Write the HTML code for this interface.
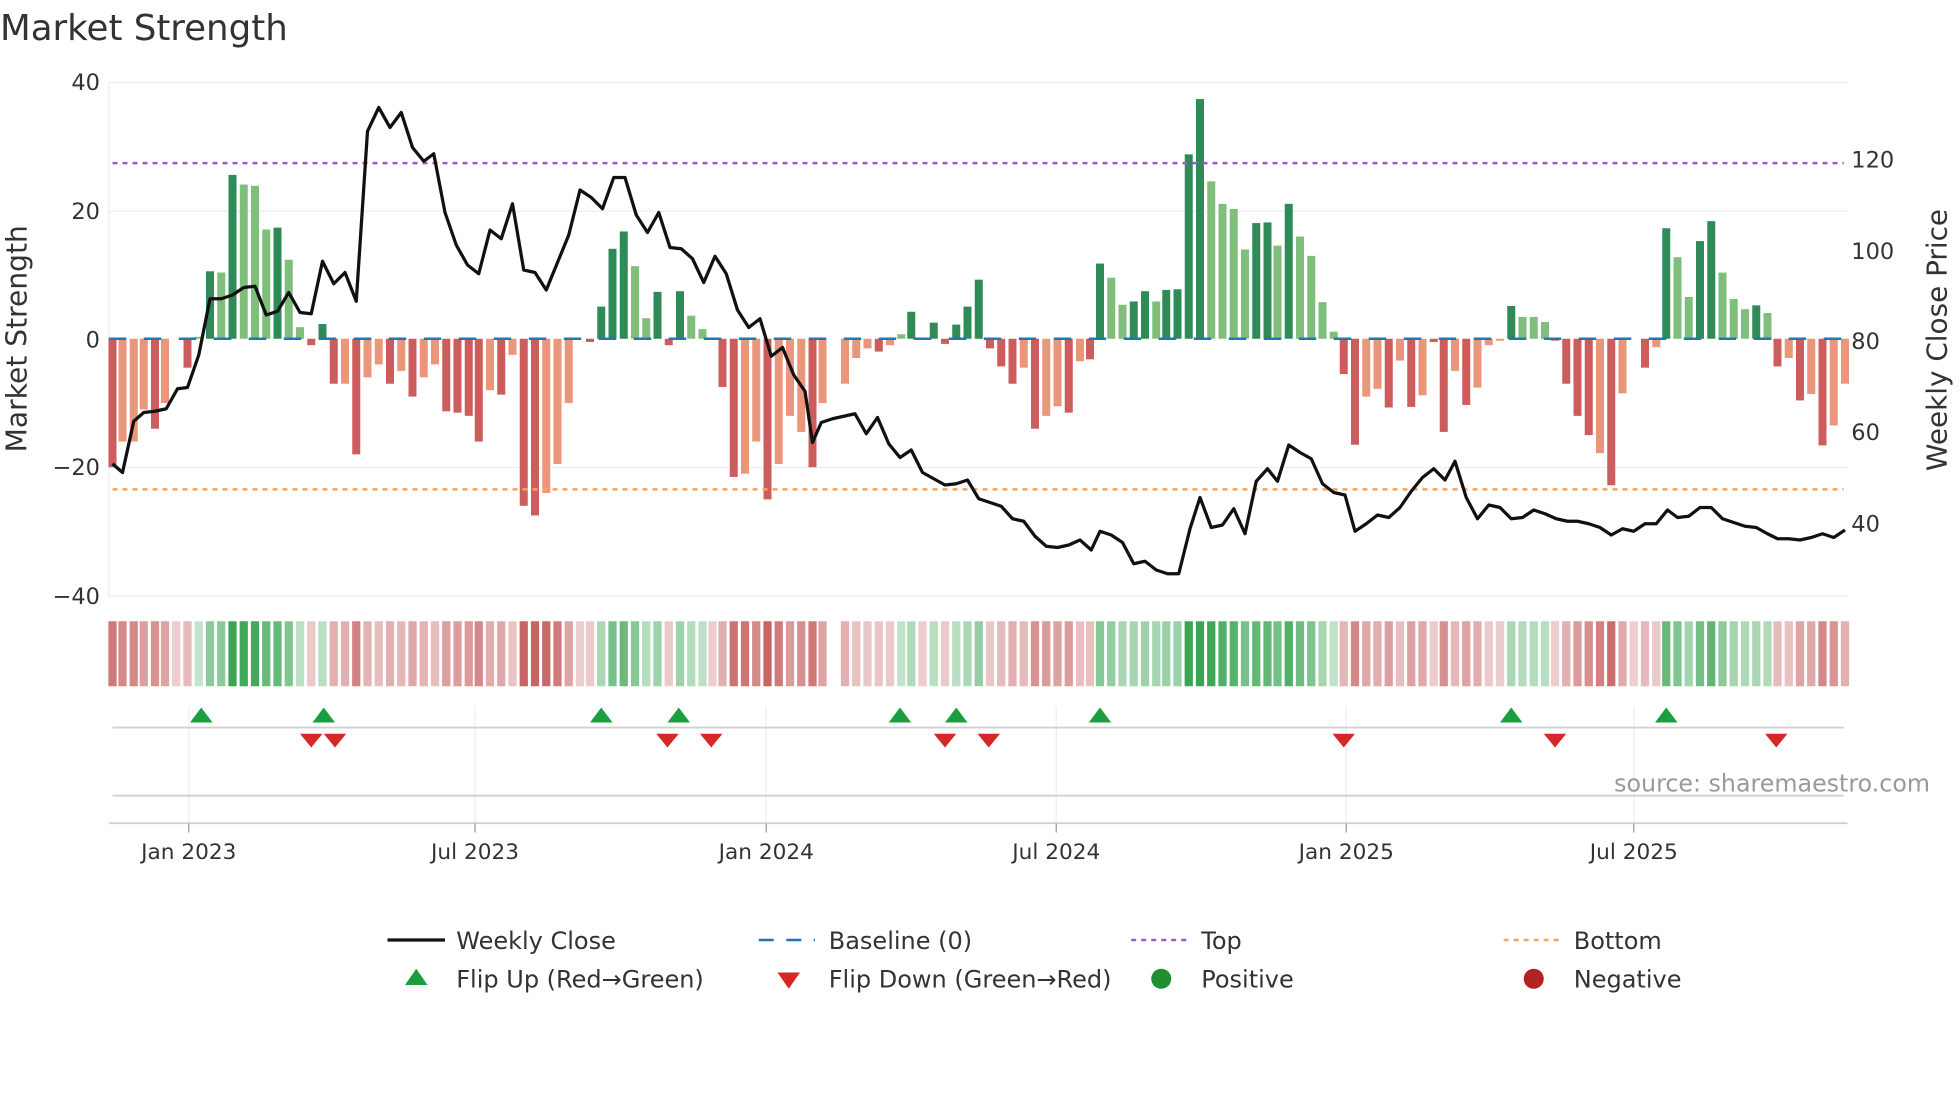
<!DOCTYPE html>
<html><head><meta charset="utf-8"><style>
html,body{margin:0;padding:0;background:#fff;}
svg{display:block;font-family:"DejaVu Sans","Liberation Sans",sans-serif;}
</style></head><body>
<svg id="s" width="1960" height="1102" viewBox="0 0 1568 881.6" xmlns="http://www.w3.org/2000/svg">
<rect width="1568" height="882" fill="#fff"/>
<text x="0" y="32" font-size="28.5" fill="#333">Market Strength</text>
<g stroke="#eceef2" stroke-width="1">
<line x1="87" y1="66" x2="1478" y2="66"/><line x1="87" y1="169" x2="1478" y2="169"/>
<line x1="87" y1="374" x2="1478" y2="374"/><line x1="87" y1="477" x2="1478" y2="477"/>
<line x1="87" y1="66" x2="87" y2="477"/>
</g>
<g font-size="18" fill="#333" text-anchor="end">
<text x="80" y="72">40</text><text x="80" y="175">20</text><text x="80" y="278">0</text>
<text x="80" y="380">−20</text><text x="80" y="483">−40</text>
</g>
<g font-size="18" fill="#333">
<text x="1481" y="134">120</text><text x="1481" y="207">100</text><text x="1481" y="279">80</text>
<text x="1481" y="352">60</text><text x="1481" y="425">40</text>
</g>
<text transform="translate(21,271) rotate(-90)" font-size="22.5" fill="#333" text-anchor="middle">Market Strength</text>
<text transform="translate(1557,272) rotate(-90)" font-size="22.3" fill="#333" text-anchor="middle">Weekly Close Price</text>
<g id="bars"></g>
<line x1="87" y1="271" x2="1478" y2="271" stroke="#1f77b4" stroke-width="2" stroke-dasharray="14 14"/>
<line x1="90" y1="130.5" x2="1475" y2="130.5" stroke="#9b59d6" stroke-width="2" stroke-dasharray="4 4"/>
<line x1="90" y1="391.5" x2="1475" y2="391.5" stroke="#f4a460" stroke-width="2" stroke-dasharray="4 4"/>
<polyline id="price" fill="none" stroke="#111" stroke-width="2.6" stroke-linejoin="round"/>
<g id="strip"></g>
<g stroke="#eceef2" stroke-width="1">
<line x1="151" y1="565" x2="151" y2="658"/><line x1="380" y1="565" x2="380" y2="658"/>
<line x1="613" y1="565" x2="613" y2="658"/><line x1="845" y1="565" x2="845" y2="658"/>
<line x1="1077" y1="565" x2="1077" y2="658"/><line x1="1307" y1="565" x2="1307" y2="658"/>
</g>
<line x1="90" y1="582" x2="1475" y2="582" stroke="#d0d0d0" stroke-width="1.5"/>
<line x1="90" y1="636.5" x2="1475" y2="636.5" stroke="#d0d0d0" stroke-width="1.5"/>
<line x1="87" y1="658.5" x2="1478" y2="658.5" stroke="#d0d0d0" stroke-width="1.5"/>
<g stroke="#999" stroke-width="1">
<line x1="151" y1="659" x2="151" y2="666"/><line x1="380" y1="659" x2="380" y2="666"/>
<line x1="613" y1="659" x2="613" y2="666"/><line x1="845" y1="659" x2="845" y2="666"/>
<line x1="1077" y1="659" x2="1077" y2="666"/><line x1="1307" y1="659" x2="1307" y2="666"/>
</g>
<g id="flips"></g>
<g font-size="17.3" fill="#333" text-anchor="middle">
<text x="151" y="687">Jan 2023</text><text x="380" y="687">Jul 2023</text><text x="613" y="687">Jan 2024</text>
<text x="845" y="687">Jul 2024</text><text x="1077" y="687">Jan 2025</text><text x="1307" y="687">Jul 2025</text>
</g>
<text x="1544" y="633" font-size="19" fill="#999" text-anchor="end">source: sharemaestro.com</text>
<g font-size="19.2" fill="#333">
<line x1="310" y1="752" x2="356" y2="752" stroke="#111" stroke-width="2.6"/>
<text x="365" y="759">Weekly Close</text>
<line x1="607" y1="752" x2="652" y2="752" stroke="#1f77b4" stroke-width="2" stroke-dasharray="12 10"/>
<text x="663" y="759">Baseline (0)</text>
<line x1="905" y1="752" x2="950" y2="752" stroke="#9b59d6" stroke-width="2" stroke-dasharray="4 4"/>
<text x="961" y="759">Top</text>
<line x1="1203" y1="752" x2="1248" y2="752" stroke="#f4a460" stroke-width="2" stroke-dasharray="4 4"/>
<text x="1259" y="759">Bottom</text>
<polygon points="324,788 342,788 333,775" fill="#1a9e3f"/>
<text x="365" y="790">Flip Up (Red→Green)</text>
<polygon points="622,778 640,778 631,791" fill="#d62728"/>
<text x="663" y="790">Flip Down (Green→Red)</text>
<circle cx="929" cy="783" r="8" fill="#1f8f2f"/>
<text x="961" y="790">Positive</text>
<circle cx="1227" cy="783" r="8" fill="#b22222"/>
<text x="1259" y="790">Negative</text>
</g>
</svg>
<script>
var B=[[90,-20,1],[98,-16,0],[107,-16,0],[115,-11,0],[124,-14,1],[132,-10,0],[141,0,0],[150,-4.5,1],[159,0.3,0],[168,10.5,1],[177,10.3,0],[186,25.5,1],[195,24,0],[204,23.8,0],[213,17,0],[222,17.3,1],[231,12.3,0],[240,1.8,0],[249,-1,1],[258,2.3,1],[267,-7,1],[276,-7,0],[285,-18,1],[294,-6,0],[303,-4,0],[312,-7,1],[321,-5,0],[330,-9,1],[339,-6,0],[348,-4,0],[357,-11.3,1],[366,-11.5,1],[375,-12,1],[383,-16,1],[392,-8,0],[401,-8.7,1],[410,-2.5,0],[419,-26,1],[428,-27.5,1],[437,-24,0],[446,-19.5,0],[455,-10,0],[464,0,0],[472,-0.5,1],[481,5,1],[490,14,1],[499,16.7,1],[508,11.3,0],[517,3.2,0],[526,7.3,1],[535,-1,1],[544,7.4,1],[553,3.6,0],[562,1.5,0],[570,0,0],[578,-7.5,1],[587,-21.5,1],[596,-21,0],[605,-16,0],[614,-25,1],[623,-19.5,0],[632,-12,0],[641,-14.5,0],[650,-20,1],[658,-10,0],[667,0,0],[676,-7,0],[685,-3,0],[694,-1.5,0],[703,-2,1],[712,-1,0],[721,0.7,0],[729,4.2,1],[738,0,0],[747,2.5,1],[756,-0.8,1],[765,2.2,1],[774,5,1],[783,9.2,1],[792,-1.5,1],[801,-4.3,1],[810,-7,1],[819,-4.5,0],[828,-14,1],[837,-12,0],[846,-10.5,0],[855,-11.5,1],[864,-3.5,0],[872,-3.2,1],[880,11.7,1],[889,9.5,0],[898,5.3,0],[907,5.8,1],[916,7.4,1],[925,5.8,0],[933,7.6,1],[942,7.7,1],[951,28.7,1],[960,37.3,1],[969,24.5,0],[978,21,0],[987,20.2,0],[996,13.9,0],[1005,18,1],[1014,18.1,1],[1022,14.5,0],[1031,21,1],[1040,15.9,0],[1049,12.9,0],[1058,5.7,0],[1067,1.1,0],[1075,-5.5,1],[1084,-16.5,1],[1093,-9,0],[1102,-7.8,0],[1111,-10.7,1],[1120,-3.4,0],[1129,-10.6,1],[1138,-8.8,0],[1147,-0.5,1],[1155,-14.5,1],[1164,-5,0],[1173,-10.3,1],[1182,-7.6,0],[1191,-1,0],[1200,-0.3,0],[1209,5.1,1],[1218,3.4,0],[1227,3.4,0],[1236,2.6,0],[1244,-0.3,1],[1253,-7,1],[1262,-12,1],[1271,-15,1],[1280,-17.8,0],[1289,-22.8,1],[1298,-8.5,0],[1307,0,0],[1316,-4.5,1],[1325,-1.3,0],[1333,17.2,1],[1342,12.7,0],[1351,6.5,0],[1360,15.2,1],[1369,18.3,1],[1378,10.3,0],[1387,6.2,0],[1396,4.6,0],[1405,5.2,1],[1414,4,0],[1422,-4.3,1],[1431,-3,0],[1440,-9.6,1],[1449,-8.6,0],[1458,-16.6,1],[1467,-13.5,0],[1476,-7,0]];
var P=[[90,371],[98,378],[107,337],[115,330],[124,329],[133,327],[142,311],[150,310],[159,284],[168,239],[177,239],[186,236],[195,230],[204,229],[213,252],[222,249],[231,234],[240,250],[249,251],[258,209],[267,227],[276,218],[285,241],[294,105],[303,86],[312,102],[321,90],[330,118],[339,129],[347,123],[356,170],[365,196],[374,212],[383,219],[392,184],[401,191],[410,163],[419,216],[428,218],[437,232],[446,210],[455,188],[464,152],[473,158],[482,167],[491,142],[500,142],[509,172],[518,186],[527,170],[536,198],[545,199],[554,207],[563,226],[572,205],[581,219],[590,248],[599,262],[608,255],[617,285],[626,278],[635,300],[644,313],[650,354],[657,338],[666,335],[675,333],[684,331],[693,347],[702,334],[711,355],[720,366],[729,360],[738,378],[747,383],[756,388],[765,387],[774,384],[783,399],[792,402],[801,405],[810,415],[819,417],[828,429],[837,437],[846,438],[855,436],[864,432],[873,440],[880,425],[889,428],[898,434],[907,451],[916,449],[925,456],[934,459],[943,459],[952,423],[960,398],[969,422],[978,420],[987,407],[996,427],[1005,385],[1014,375],[1022,385],[1031,356],[1040,362],[1049,367],[1058,387],[1067,394],[1076,396],[1084,425],[1093,419],[1102,412],[1111,414],[1120,406],[1129,393],[1138,382],[1147,375],[1156,384],[1164,369],[1173,398],[1182,415],[1191,404],[1200,406],[1209,415],[1218,414],[1227,408],[1236,411],[1245,415],[1254,417],[1262,417],[1271,419],[1280,422],[1289,428],[1298,423],[1307,425],[1316,419],[1325,419],[1334,408],[1342,414],[1351,413],[1360,406],[1369,406],[1378,415],[1387,418],[1396,421],[1405,422],[1414,427],[1422,431],[1431,431],[1440,432],[1449,430],[1458,427],[1467,430],[1476,424]];
var NS="http://www.w3.org/2000/svg";
function el(p,t,a){var e=document.createElementNS(NS,t);for(var k in a)e.setAttribute(k,a[k]);p.appendChild(e);return e;}
var bars=document.getElementById('bars'),strip=document.getElementById('strip');
function mix(a,b,t){return 'rgb('+[0,1,2].map(function(i){return Math.round(a[i]+(b[i]-a[i])*t)}).join(',')+')';}
B.forEach(function(b,i){
 var v=b[1],h=Math.abs(v)*5.14,y=v>=0?271-h:271;
 var c=v>=0?(b[2]?'#2e8b57':'#7fbf7b'):(b[2]?'#cd5c5c':'#e9967a');
 if(h>0.3)el(bars,'rect',{x:b[0]-3.2,y:y,width:6.4,height:h,fill:c});
 if(b[0]>=663&&b[0]<=670)return;
 var t=Math.min(1,Math.abs(v)/25)*0.85+0.15,col;
 if(v>0)col=mix([222,240,226],[60,165,85],t);else col=mix([243,224,224],[200,100,100],t);
 el(strip,'rect',{x:b[0]-3.3,y:497,width:6.6,height:52,fill:col});
});
document.getElementById('price').setAttribute('points',P.map(function(p){return p.join(',')}).join(' '));
var fl=document.getElementById('flips');
[161,259,481,543,720,765,880,1209,1333].forEach(function(x){el(fl,'polygon',{points:(x-9)+',578 '+(x+9)+',578 '+x+',566',fill:'#1a9e3f'});});
[249,268,534,569,756,791,1075,1244,1421].forEach(function(x){el(fl,'polygon',{points:(x-9)+',587 '+(x+9)+',587 '+x+',598',fill:'#d62728'});});
</script>
</body></html>
